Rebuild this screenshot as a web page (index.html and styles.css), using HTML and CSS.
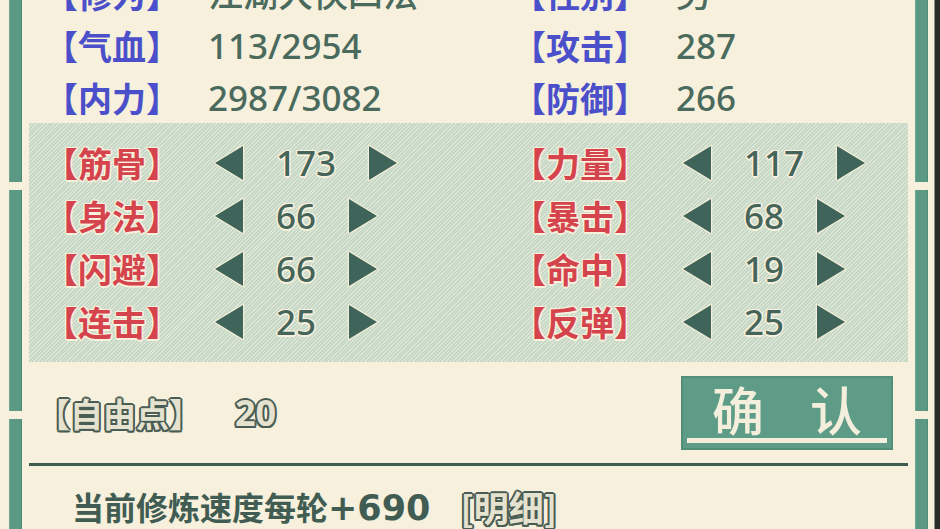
FILE: index.html
```html
<!DOCTYPE html>
<html lang="zh-CN">
<head>
<meta charset="utf-8">
<title>属性</title>
<link rel="stylesheet" href="styles.css">
</head>
<body>
<div class="screen">
  <div class="rail">
    <i class="seg seg-a"></i><i class="seg seg-b"></i><i class="seg seg-c"></i>
  </div>
  <div class="main">
    <div class="info">
      <div class="cell"><span class="lbl blue">【修为】</span><span class="val">江湖大侠四法</span></div>
      <div class="cell"><span class="lbl blue">【性别】</span><span class="val">男</span></div>
      <div class="cell"><span class="lbl blue">【气血】</span><span class="val">113/2954</span></div>
      <div class="cell"><span class="lbl blue">【攻击】</span><span class="val">287</span></div>
      <div class="cell"><span class="lbl blue">【内力】</span><span class="val">2987/3082</span></div>
      <div class="cell"><span class="lbl blue">【防御】</span><span class="val">266</span></div>
    </div>
    <div class="panel">
      <div class="stat"><span class="lbl red">【筋骨】</span><svg class="arr" viewBox="0 0 32 38"><polygon points="30,2 30,36 2,19"/></svg><span class="num">173</span><svg class="arr" viewBox="0 0 32 38"><polygon points="2,2 2,36 30,19"/></svg></div>
      <div class="stat"><span class="lbl red">【力量】</span><svg class="arr" viewBox="0 0 32 38"><polygon points="30,2 30,36 2,19"/></svg><span class="num">117</span><svg class="arr" viewBox="0 0 32 38"><polygon points="2,2 2,36 30,19"/></svg></div>
      <div class="stat"><span class="lbl red">【身法】</span><svg class="arr" viewBox="0 0 32 38"><polygon points="30,2 30,36 2,19"/></svg><span class="num">66</span><svg class="arr" viewBox="0 0 32 38"><polygon points="2,2 2,36 30,19"/></svg></div>
      <div class="stat"><span class="lbl red">【暴击】</span><svg class="arr" viewBox="0 0 32 38"><polygon points="30,2 30,36 2,19"/></svg><span class="num">68</span><svg class="arr" viewBox="0 0 32 38"><polygon points="2,2 2,36 30,19"/></svg></div>
      <div class="stat"><span class="lbl red">【闪避】</span><svg class="arr" viewBox="0 0 32 38"><polygon points="30,2 30,36 2,19"/></svg><span class="num">66</span><svg class="arr" viewBox="0 0 32 38"><polygon points="2,2 2,36 30,19"/></svg></div>
      <div class="stat"><span class="lbl red">【命中】</span><svg class="arr" viewBox="0 0 32 38"><polygon points="30,2 30,36 2,19"/></svg><span class="num">19</span><svg class="arr" viewBox="0 0 32 38"><polygon points="2,2 2,36 30,19"/></svg></div>
      <div class="stat"><span class="lbl red">【连击】</span><svg class="arr" viewBox="0 0 32 38"><polygon points="30,2 30,36 2,19"/></svg><span class="num">25</span><svg class="arr" viewBox="0 0 32 38"><polygon points="2,2 2,36 30,19"/></svg></div>
      <div class="stat"><span class="lbl red">【反弹】</span><svg class="arr" viewBox="0 0 32 38"><polygon points="30,2 30,36 2,19"/></svg><span class="num">25</span><svg class="arr" viewBox="0 0 32 38"><polygon points="2,2 2,36 30,19"/></svg></div>
    </div>
    <div class="free">
      <span class="outl">【自由点】</span><span class="outl pts">20</span>
      <div class="confirm">
        <div class="confirm-text"><span>确</span><span>认</span></div>
        <div class="confirm-line"></div>
      </div>
    </div>
    <div class="divider"></div>
    <div class="speed"><span class="speed-text">当前修炼速度每轮<span class="speed-num">+690</span></span><span class="outl detail">[明细]</span></div>
  </div>
  <div class="rail">
    <i class="seg seg-a"></i><i class="seg seg-b"></i><i class="seg seg-c"></i>
  </div>
  <div class="edge"></div>
</div>
</body>
</html>
```

FILE: styles.css
```css
html, body {
  margin: 0;
  padding: 0;
}
body {
  width: 940px;
  height: 529px;
  overflow: hidden;
  background: #f6f0dc;
}
.screen {
  display: flex;
  width: 940px;
  height: 529px;
  overflow: hidden;
  background: #f6f0dc;
  font-family: "Noto Sans", "Noto Sans CJK SC", sans-serif;
}
.rail {
  width: 13px;
  margin-left: 9px;
  display: flex;
  flex-direction: column;
  gap: 8px;
  flex: none;
}
.rail + .main + .rail {
  margin-left: 7px;
}
.seg {
  display: block;
  background: #5c9985;
  box-shadow: inset 1px 0 0 #6ca893, inset -1px 0 0 #4f8c78;
}
.seg-a { height: 182px; }
.seg-b { height: 221px; }
.seg-c { flex: 1; }
.edge {
  width: 6px;
  margin-left: 6px;
  background: #2b2c29;
  box-shadow: inset 1px 0 0 #8c8f86;
  flex: none;
}
.main {
  width: 879px;
  margin-left: 7px;
  flex: none;
  display: flex;
  flex-direction: column;
}

/* info rows */
.info {
  margin-top: -32px;
  padding-left: 15px;
  display: grid;
  grid-template-columns: 468px 1fr;
  grid-auto-rows: 52px;
}
.cell {
  display: flex;
  align-items: center;
  height: 52px;
}
.lbl {
  font-family: "Noto Sans CJK SC", sans-serif;
  font-size: 34px;
  font-weight: 700;
  line-height: 52px;
  white-space: nowrap;
}
.info .lbl {
  width: 164px;
}
.blue {
  color: #4b4fc9;
}
.val {
  font-size: 35px;
  font-weight: 500;
  color: #4a6a5d;
  line-height: 52px;
  white-space: nowrap;
}

/* stat panel */
.panel {
  margin-top: -1px;
  height: 239px;
  box-sizing: border-box;
  padding: 13px 0 0 15px;
  display: grid;
  grid-template-columns: 468px 1fr;
  grid-auto-rows: 53px;
  background-color: #d2dfcd;
  background-image: repeating-linear-gradient(135deg, #dce6d6 0 1.2px, #c6d6c4 1.2px 2.6px);
}
.stat {
  display: flex;
  align-items: center;
  height: 53px;
}
.red {
  color: #d5444d;
  text-shadow: -1.5px 0 #f6f0dc, 1.5px 0 #f6f0dc, 0 -1.5px #f6f0dc, 0 1.5px #f6f0dc,
    -1px -1px #f6f0dc, 1px -1px #f6f0dc, -1px 1px #f6f0dc, 1px 1px #f6f0dc;
}
.stat .lbl {
  width: 171px;
}
.arr {
  width: 32px;
  height: 38px;
  flex: none;
  margin: 0 -2px;
}
.arr polygon {
  fill: #3f6459;
  stroke: #f3eed9;
  stroke-width: 2.5;
  stroke-linejoin: round;
  paint-order: stroke;
}
.num {
  font-size: 35px;
  font-weight: 500;
  color: #45645a;
  line-height: 53px;
  margin: 0 33px;
  text-shadow: -1.5px 0 #f6f0dc, 1.5px 0 #f6f0dc, 0 -1.5px #f6f0dc, 0 1.5px #f6f0dc,
    -1px -1px #f6f0dc, 1px -1px #f6f0dc, -1px 1px #f6f0dc, 1px 1px #f6f0dc;
}

/* free points */
.free {
  height: 101px;
  display: flex;
  align-items: center;
  padding-left: 8px;
  padding-right: 15px;
}
.outl {
  font-family: "Noto Sans CJK SC", sans-serif;
  font-size: 33px;
  font-weight: 700;
  color: #e6e2d0;
  text-shadow: -2px 0 #4a5d54, 2px 0 #4a5d54, 0 -2px #4a5d54, 0 2px #4a5d54,
    -1.5px -1.5px #4a5d54, 1.5px -1.5px #4a5d54, -1.5px 1.5px #4a5d54, 1.5px 1.5px #4a5d54;
  white-space: nowrap;
}
.pts {
  font-family: "Noto Sans", sans-serif;
  font-size: 36px;
  margin-left: 33px;
}
.confirm {
  margin-left: auto;
  width: 212px;
  height: 74px;
  box-sizing: border-box;
  background: #5f9c88;
  border: 2px solid #528f7b;
  display: flex;
  flex-direction: column;
  padding: 2px 4px 0;
}
.confirm-text {
  display: flex;
  justify-content: center;
  gap: 46px;
  height: 58px;
  line-height: 58px;
  font-family: "Noto Sans CJK SC", sans-serif;
  font-size: 52px;
  font-weight: 500;
  color: #f4efdc;
}
.confirm-line {
  height: 5px;
  background: #f4efdc;
}

.divider {
  height: 3px;
  background: #3f5a50;
  flex: none;
}
.speed {
  padding: 21px 0 0 43px;
  display: flex;
  align-items: center;
  height: 40px;
  line-height: 40px;
}
.speed-text {
  font-family: "Noto Sans CJK SC", sans-serif;
  font-size: 32px;
  font-weight: 700;
  color: #415d53;
  white-space: nowrap;
  text-shadow: -1px 0 #f6f0dc, 1px 0 #f6f0dc, 0 -1px #f6f0dc, 0 1px #f6f0dc;
}
.speed-num {
  font-family: "DejaVu Sans", sans-serif;
  font-size: 35px;
}
.detail {
  margin-left: 30px;
  font-size: 35px;
}
```
